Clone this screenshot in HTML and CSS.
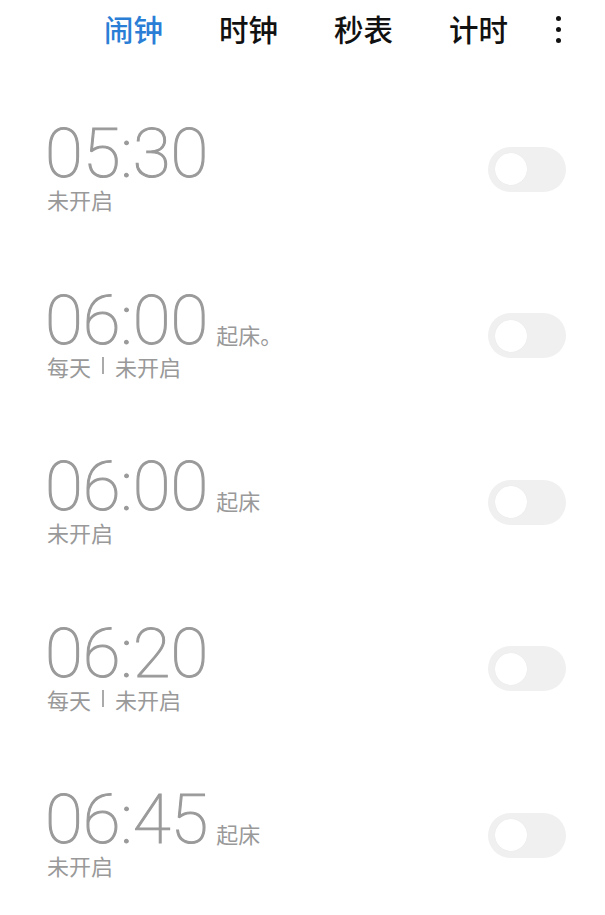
FILE: index.html
```html
<!doctype html>
<html>
<head>
<meta charset="utf-8">
<meta name="viewport" content="width=device-width, initial-scale=1.0">
<link rel="stylesheet" href="styles.css">
<title>闹钟</title>
</head>
<body>
<div class="tabs">
    <span class="tab active">闹钟</span>
    <span class="tab">时钟</span>
    <span class="tab">秒表</span>
    <span class="tab">计时</span>
    <span class="more"><i></i><i></i><i></i></span>
</div>

<ul class="alarms">
    <li class="alarm">
        <div class="info">
            <div class="line"><span class="time">05:30</span></div>
            <p class="sub">未开启</p>
        </div>
        <span class="switch"><i></i></span>
    </li>
    <li class="alarm">
        <div class="info">
            <div class="line"><span class="time">06:00</span><span class="label">起床。</span></div>
            <p class="sub">每天<span class="sep"></span>未开启</p>
        </div>
        <span class="switch"><i></i></span>
    </li>
    <li class="alarm">
        <div class="info">
            <div class="line"><span class="time">06:00</span><span class="label">起床</span></div>
            <p class="sub">未开启</p>
        </div>
        <span class="switch"><i></i></span>
    </li>
    <li class="alarm">
        <div class="info">
            <div class="line"><span class="time">06:20</span></div>
            <p class="sub">每天<span class="sep"></span>未开启</p>
        </div>
        <span class="switch"><i></i></span>
    </li>
    <li class="alarm">
        <div class="info">
            <div class="line"><span class="time">06:45</span><span class="label">起床</span></div>
            <p class="sub">未开启</p>
        </div>
        <span class="switch"><i></i></span>
    </li>
</ul>
</body>
</html>
```

FILE: styles.css
```css
* {
    box-sizing: border-box;
}
body {
    margin: 0;
    background-color: white;
    font-family: "Noto Sans CJK SC", "Noto Sans", sans-serif;
    color: #999;
}
p {
    margin: 0;
}

.tabs {
    display: flex;
    align-items: center;
    height: 58px;
    padding-left: 104px;
    gap: 56px;
}
.tab {
    font-size: 29.5px;
    font-weight: 500;
    color: #111;
    line-height: 1;
}
.tab.active {
    color: #2a7ed6;
}
.more {
    display: flex;
    flex-direction: column;
    gap: 6px;
    margin-left: -8px;
}
.more i {
    display: block;
    width: 5px;
    height: 5px;
    border-radius: 50%;
    background: #111;
}

.alarms {
    list-style: none;
    margin: 0;
    padding: 28px 0 0 0;
}
.alarm {
    display: flex;
    align-items: center;
    justify-content: space-between;
    height: 166.5px;
    padding: 0 39px 0 45px;
}
.line {
    display: flex;
    align-items: baseline;
    height: 58px;
}
.time {
    font-family: Roboto, "Noto Sans", sans-serif;
    font-weight: 100;
    font-size: 69px;
    line-height: 58px;
    color: #9a9a9a;
    -webkit-text-stroke: 1.1px #9a9a9a;
}
.label {
    margin-left: 8px;
    font-size: 22px;
    color: #999;
}
.sub {
    display: flex;
    align-items: center;
    margin-top: 2px;
    margin-left: 2px;
    font-size: 22px;
    line-height: 28px;
    color: #999;
}
.sep {
    display: block;
    width: 2px;
    height: 17px;
    margin: 0 11px;
    background: #aaa;
}

.switch {
    display: flex;
    align-items: center;
    width: 78px;
    height: 45px;
    padding-left: 7px;
    border-radius: 23px;
    background: #f0f0f0;
}
.switch i {
    display: block;
    width: 32px;
    height: 32px;
    border-radius: 50%;
    background: white;
    box-shadow: 0 0 1px rgba(0, 0, 0, 0.08);
}
```
